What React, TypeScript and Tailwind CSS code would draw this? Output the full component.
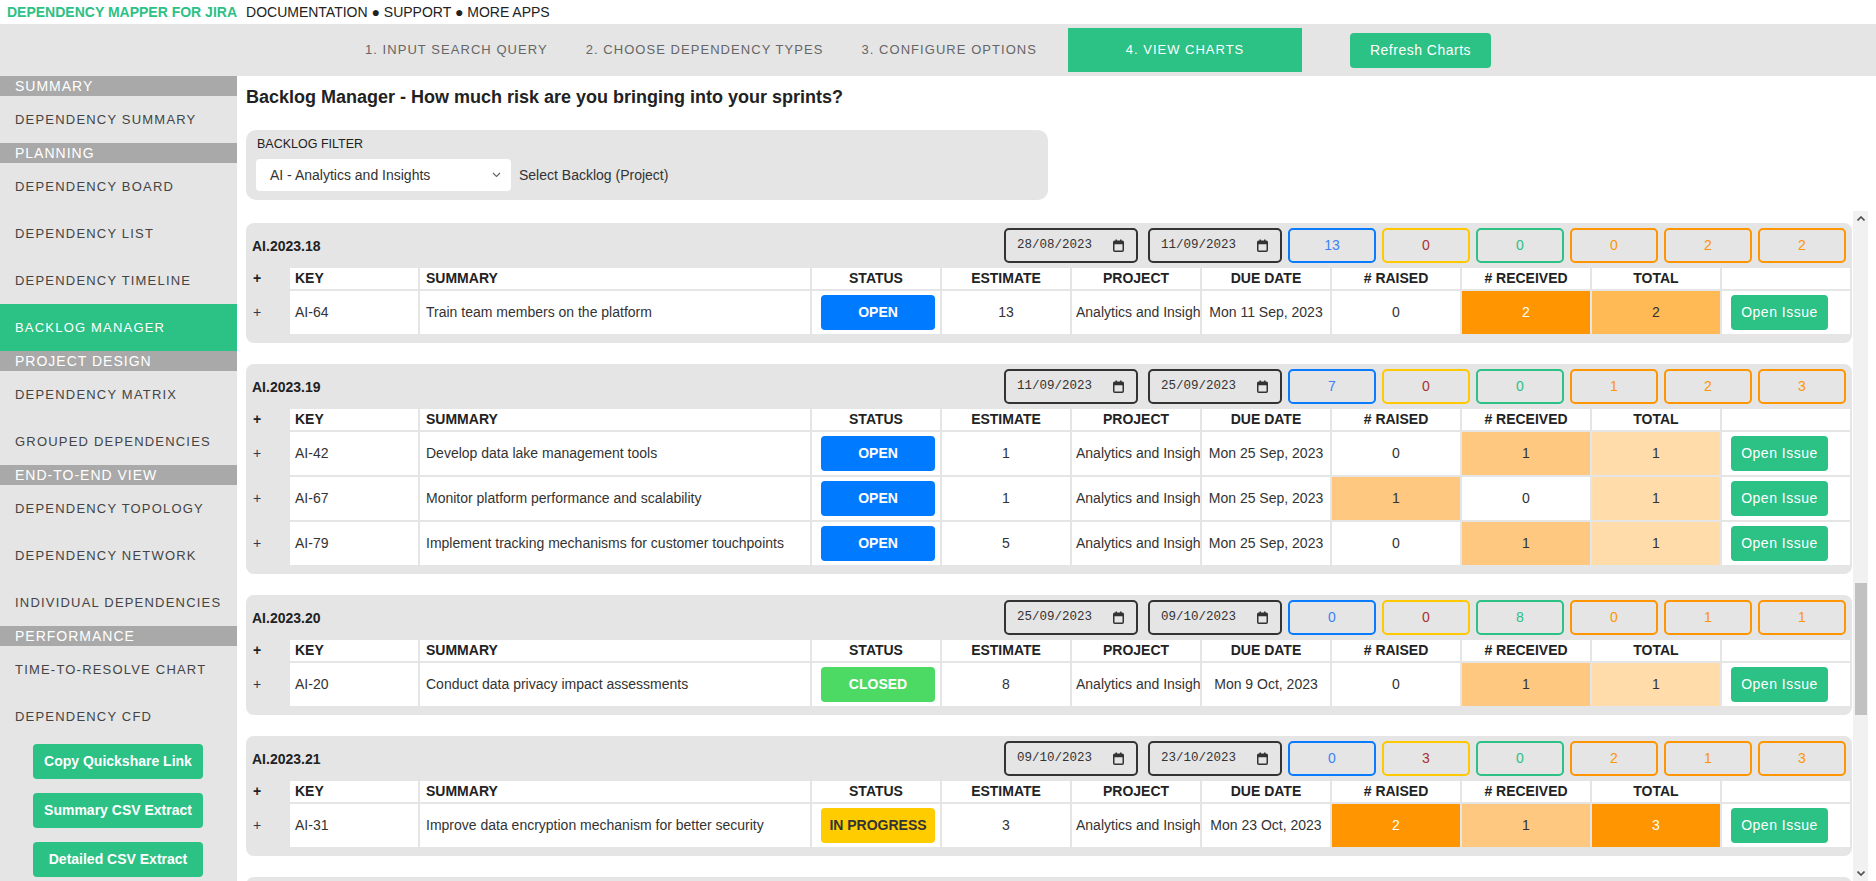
import React, { useEffect, useRef } from 'react';

type Status = 'OPEN' | 'CLOSED' | 'IN PROGRESS';

interface Row {
  key: string;
  summary: string;
  status: Status;
  estimate: number;
  due: string;
  raised: number;
  received: number;
}

interface Sprint {
  name: string;
  start: string;
  end: string;
  counts: number[];
  rows: Row[];
}

const MAX_RAISED = 2;
const MAX_RECEIVED = 2;
const MAX_TOTAL = 3;

const mk = (key: string, summary: string, status: Status, estimate: number, due: string, raised = 0, received = 0): Row => ({
  key,
  summary,
  status,
  estimate,
  due,
  raised,
  received,
});

// earlier sprints sit above the fold, the list is scrolled down to AI.2023.18
const before: Sprint[] = [
  {
    name: 'AI.2023.10', start: '24/04/2023', end: '08/05/2023', counts: [0, 0, 9, 1, 0, 1],
    rows: [
      mk('AI-3', 'Define KPIs for analytics dashboards', 'CLOSED', 3, 'Mon 8 May, 2023', 1, 0),
      mk('AI-5', 'Set up data warehouse environments', 'CLOSED', 5, 'Mon 8 May, 2023'),
      mk('AI-8', 'Document reporting data sources', 'CLOSED', 1, 'Mon 8 May, 2023'),
    ],
  },
  {
    name: 'AI.2023.11', start: '08/05/2023', end: '22/05/2023', counts: [0, 0, 8, 0, 1, 1],
    rows: [
      mk('AI-11', 'Build ingestion pipeline for event data', 'CLOSED', 5, 'Mon 22 May, 2023', 0, 1),
      mk('AI-12', 'Create data quality checks', 'CLOSED', 2, 'Mon 22 May, 2023'),
      mk('AI-14', 'Review access policies for analysts', 'CLOSED', 1, 'Mon 22 May, 2023'),
    ],
  },
  {
    name: 'AI.2023.12', start: '22/05/2023', end: '05/06/2023', counts: [0, 0, 7, 1, 1, 2],
    rows: [
      mk('AI-16', 'Design customer segmentation model', 'CLOSED', 3, 'Mon 5 Jun, 2023', 1, 1),
      mk('AI-17', 'Prototype churn prediction features', 'CLOSED', 3, 'Mon 5 Jun, 2023'),
      mk('AI-18', 'Tag historical orders by channel', 'CLOSED', 1, 'Mon 5 Jun, 2023'),
    ],
  },
  {
    name: 'AI.2023.13', start: '05/06/2023', end: '19/06/2023', counts: [0, 0, 7, 0, 0, 0],
    rows: [
      mk('AI-19', 'Automate weekly usage report', 'CLOSED', 2, 'Mon 19 Jun, 2023'),
      mk('AI-21', 'Add alerting for failed pipeline runs', 'CLOSED', 3, 'Mon 19 Jun, 2023'),
      mk('AI-23', 'Clean up legacy reporting tables', 'CLOSED', 2, 'Mon 19 Jun, 2023'),
    ],
  },
  {
    name: 'AI.2023.14', start: '19/06/2023', end: '03/07/2023', counts: [0, 0, 9, 1, 1, 2],
    rows: [
      mk('AI-25', 'Integrate marketing attribution data', 'CLOSED', 5, 'Mon 3 Jul, 2023', 1, 0),
      mk('AI-26', 'Publish self-service analytics guide', 'CLOSED', 1, 'Mon 3 Jul, 2023'),
      mk('AI-28', 'Optimise query performance on large datasets', 'CLOSED', 3, 'Mon 3 Jul, 2023', 0, 1),
    ],
  },
  {
    name: 'AI.2023.15', start: '03/07/2023', end: '17/07/2023', counts: [0, 0, 8, 0, 1, 1],
    rows: [
      mk('AI-30', 'Build product funnel visualisations', 'CLOSED', 3, 'Mon 17 Jul, 2023', 0, 1),
      mk('AI-33', 'Set up A/B testing framework', 'CLOSED', 3, 'Mon 17 Jul, 2023'),
      mk('AI-34', 'Map data lineage for finance reports', 'CLOSED', 2, 'Mon 17 Jul, 2023'),
    ],
  },
  {
    name: 'AI.2023.16', start: '17/07/2023', end: '31/07/2023', counts: [0, 0, 10, 0, 0, 0],
    rows: [
      mk('AI-36', 'Create executive summary dashboard', 'CLOSED', 5, 'Mon 31 Jul, 2023'),
      mk('AI-38', 'Validate forecasting model accuracy', 'CLOSED', 3, 'Mon 31 Jul, 2023'),
      mk('AI-39', 'Archive unused dashboards', 'CLOSED', 2, 'Mon 31 Jul, 2023'),
    ],
  },
  {
    name: 'AI.2023.17', start: '31/07/2023', end: '14/08/2023', counts: [3, 0, 5, 1, 0, 1],
    rows: [
      mk('AI-41', 'Roll out anomaly detection on key metrics', 'IN PROGRESS', 3, 'Mon 14 Aug, 2023', 1, 0),
      mk('AI-44', 'Consolidate customer identity records', 'CLOSED', 3, 'Mon 14 Aug, 2023'),
      mk('AI-45', 'Train analysts on new BI tooling', 'CLOSED', 2, 'Mon 14 Aug, 2023'),
    ],
  },
];

const visible: Sprint[] = [
  {
    name: 'AI.2023.18', start: '28/08/2023', end: '11/09/2023', counts: [13, 0, 0, 0, 2, 2],
    rows: [mk('AI-64', 'Train team members on the platform', 'OPEN', 13, 'Mon 11 Sep, 2023', 0, 2)],
  },
  {
    name: 'AI.2023.19', start: '11/09/2023', end: '25/09/2023', counts: [7, 0, 0, 1, 2, 3],
    rows: [
      mk('AI-42', 'Develop data lake management tools', 'OPEN', 1, 'Mon 25 Sep, 2023', 0, 1),
      mk('AI-67', 'Monitor platform performance and scalability', 'OPEN', 1, 'Mon 25 Sep, 2023', 1, 0),
      mk('AI-79', 'Implement tracking mechanisms for customer touchpoints', 'OPEN', 5, 'Mon 25 Sep, 2023', 0, 1),
    ],
  },
  {
    name: 'AI.2023.20', start: '25/09/2023', end: '09/10/2023', counts: [0, 0, 8, 0, 1, 1],
    rows: [mk('AI-20', 'Conduct data privacy impact assessments', 'CLOSED', 8, 'Mon 9 Oct, 2023', 0, 1)],
  },
  {
    name: 'AI.2023.21', start: '09/10/2023', end: '23/10/2023', counts: [0, 3, 0, 2, 1, 3],
    rows: [mk('AI-31', 'Improve data encryption mechanism for better security', 'IN PROGRESS', 3, 'Mon 23 Oct, 2023', 2, 1)],
  },
];

const after: Sprint[] = [
  {
    name: 'AI.2023.22', start: '23/10/2023', end: '06/11/2023', counts: [9, 0, 0, 1, 1, 2],
    rows: [
      mk('AI-47', 'Migrate reports to the new data platform', 'OPEN', 5, 'Mon 6 Nov, 2023', 1, 0),
      mk('AI-52', 'Define retention rules for raw event data', 'OPEN', 2, 'Mon 6 Nov, 2023'),
      mk('AI-55', 'Build customer lifetime value model', 'OPEN', 2, 'Mon 6 Nov, 2023', 0, 1),
    ],
  },
  {
    name: 'AI.2023.23', start: '06/11/2023', end: '20/11/2023', counts: [6, 0, 0, 0, 1, 1],
    rows: [
      mk('AI-58', 'Expose metrics API for partner teams', 'OPEN', 3, 'Mon 20 Nov, 2023', 0, 1),
      mk('AI-60', 'Review dashboard usage statistics', 'OPEN', 3, 'Mon 20 Nov, 2023'),
    ],
  },
  {
    name: 'AI.2023.24', start: '20/11/2023', end: '04/12/2023', counts: [8, 0, 0, 1, 0, 1],
    rows: [
      mk('AI-70', 'Automate data catalogue updates', 'OPEN', 3, 'Mon 4 Dec, 2023', 1, 0),
      mk('AI-72', 'Harden access logging for audits', 'OPEN', 3, 'Mon 4 Dec, 2023'),
      mk('AI-75', 'Plan capacity for peak reporting season', 'OPEN', 2, 'Mon 4 Dec, 2023'),
    ],
  },
  {
    name: 'AI.2023.25', start: '04/12/2023', end: '18/12/2023', counts: [5, 0, 0, 0, 0, 0],
    rows: [mk('AI-81', 'Prepare year-end analytics review', 'OPEN', 5, 'Mon 18 Dec, 2023')],
  },
];

const GREEN = 'bg-[#2cc185]';

const countStyles = [
  'border-[#0a7bff] text-[#3b82f6]',
  'border-[#ffc800] text-[#a83232]',
  'border-[#2cc185] text-[#2cc185]',
  'border-[#ff9500] text-[#ff9500]',
  'border-[#ff9500] text-[#ff9500]',
  'border-[#ff9500] text-[#ff9500]',
];

const statusStyles: Record<Status, string> = {
  OPEN: 'bg-[#007bff] text-white',
  CLOSED: 'bg-[#4cd964] text-white',
  'IN PROGRESS': 'bg-[#ffcc00] text-[#333]',
};

const heat = (v: number, max: number) => {
  const r = v / max;
  if (r === 0) return 'bg-white text-[#333]';
  if (r >= 1) return 'bg-[#ff9500] text-white';
  if (r >= 0.6) return 'bg-[#ffb955] text-[#333]';
  if (r >= 0.5) return 'bg-[#ffc880] text-[#333]';
  return 'bg-[#ffdcaa] text-[#333]';
};

const CalendarIcon = () => (
  <svg width="11" height="13" viewBox="0 0 11 13" fill="none">
    <rect x="0.75" y="2.25" width="9.5" height="10" rx="1" stroke="#333" strokeWidth="1.5" />
    <rect x="0.75" y="2.25" width="9.5" height="3" fill="#333" />
    <rect x="2.5" y="0.5" width="1.5" height="2.5" fill="#333" />
    <rect x="7" y="0.5" width="1.5" height="2.5" fill="#333" />
  </svg>
);

const DateBox = ({ value }: { value: string }) => (
  <div className="w-[134px] h-[35px] shrink-0 border-2 border-[#333] rounded-[5px] flex items-center justify-between pl-[11px] pr-[12px] font-['Liberation_Mono',monospace] text-[12.5px] text-[#333]">
    <span>{value}</span>
    <CalendarIcon />
  </div>
);

const SprintCard = React.forwardRef<HTMLDivElement, { sprint: Sprint }>(({ sprint }, ref) => (
  <div ref={ref} className="rounded-[8px] bg-[#e5e5e5] pt-[5px] pb-[7px]">
    {/* header: sprint name, dates, counters */}
    <div className="flex items-center h-[35px] pl-[6px] pr-[6px]">
      <div className="flex-1 pt-[1px] text-[14px] font-bold text-[#222]">{sprint.name}</div>
      <DateBox value={sprint.start} />
      <div className="ml-[10px]">
        <DateBox value={sprint.end} />
      </div>
      <div className="ml-[6px] flex gap-[6px]">
        {sprint.counts.map((c, i) => (
          <div
            key={i}
            className={`w-[88px] h-[35px] border-2 rounded-[5px] flex items-center justify-center text-[14px] ${countStyles[i]}`}
          >
            {c}
          </div>
        ))}
      </div>
    </div>

    <table className="mt-[3px] w-full table-fixed border-separate border-spacing-[2px] text-[14px] text-[#333]">
      <colgroup>
        <col className="w-[40px]" />
        <col className="w-[128px]" />
        <col />
        <col className="w-[128px]" />
        <col className="w-[128px]" />
        <col className="w-[128px]" />
        <col className="w-[128px]" />
        <col className="w-[128px]" />
        <col className="w-[128px]" />
        <col className="w-[128px]" />
        <col className="w-[128px]" />
      </colgroup>
      <thead>
        <tr className="h-[20px] font-bold text-[#222]">
          <th className="p-0 pl-[5px] text-left">+</th>
          <th className="p-0 pl-[5px] text-left bg-white">KEY</th>
          <th className="p-0 pl-[6px] text-left bg-white">SUMMARY</th>
          <th className="p-0 bg-white">STATUS</th>
          <th className="p-0 bg-white">ESTIMATE</th>
          <th className="p-0 bg-white">PROJECT</th>
          <th className="p-0 bg-white">DUE DATE</th>
          <th className="p-0 bg-white"># RAISED</th>
          <th className="p-0 bg-white"># RECEIVED</th>
          <th className="p-0 bg-white">TOTAL</th>
          <th className="p-0 bg-white"></th>
        </tr>
      </thead>
      <tbody>
        {sprint.rows.map((r) => {
          const total = r.raised + r.received;
          return (
            <tr key={r.key} className="h-[43px]">
              <td className="p-0 pl-[5px] text-[#335]">+</td>
              <td className="p-0 pl-[5px] bg-white">{r.key}</td>
              <td className="p-0 pl-[6px] bg-white whitespace-nowrap overflow-hidden">{r.summary}</td>
              <td className="p-0 pl-[9px] bg-white">
                <div className={`w-[114px] h-[35px] rounded-[4px] flex items-center justify-center font-bold ${statusStyles[r.status]}`}>
                  {r.status}
                </div>
              </td>
              <td className="p-0 bg-white text-center">{r.estimate}</td>
              <td className="p-0 px-[4px] bg-white text-center whitespace-nowrap overflow-hidden">Analytics and Insights</td>
              <td className="p-0 bg-white text-center whitespace-nowrap">{r.due}</td>
              <td className={`p-0 text-center ${heat(r.raised, MAX_RAISED)}`}>{r.raised}</td>
              <td className={`p-0 text-center ${heat(r.received, MAX_RECEIVED)}`}>{r.received}</td>
              <td className={`p-0 text-center ${heat(total, MAX_TOTAL)}`}>{total}</td>
              <td className="p-0 pl-[9px] bg-white">
                <button className={`w-[97px] h-[35px] rounded-[4px] ${GREEN} text-white text-[14px] tracking-[0.5px]`}>
                  Open Issue
                </button>
              </td>
            </tr>
          );
        })}
      </tbody>
    </table>
  </div>
));

const sections: { title: string; items: string[] }[] = [
  { title: 'SUMMARY', items: ['DEPENDENCY SUMMARY'] },
  { title: 'PLANNING', items: ['DEPENDENCY BOARD', 'DEPENDENCY LIST', 'DEPENDENCY TIMELINE', 'BACKLOG MANAGER'] },
  { title: 'PROJECT DESIGN', items: ['DEPENDENCY MATRIX', 'GROUPED DEPENDENCIES'] },
  { title: 'END-TO-END VIEW', items: ['DEPENDENCY TOPOLOGY', 'DEPENDENCY NETWORK', 'INDIVIDUAL DEPENDENCIES'] },
  { title: 'PERFORMANCE', items: ['TIME-TO-RESOLVE CHART', 'DEPENDENCY CFD'] },
];

const Sidebar = () => (
  <aside className="w-[237px] shrink-0 bg-[#e5e5e5] flex flex-col">
    {sections.map((s) => (
      <div key={s.title}>
        <div className="h-[20px] bg-[#a9a9a9] pl-[15px] text-[14px] leading-[20px] tracking-[1px] text-white">{s.title}</div>
        {s.items.map((item) => {
          const active = item === 'BACKLOG MANAGER';
          return (
            <div
              key={item}
              className={`h-[47px] flex items-center pl-[15px] text-[13px] tracking-[1.2px] ${
                active ? `${GREEN} text-white` : 'text-[#444]'
              }`}
            >
              {item}
            </div>
          );
        })}
      </div>
    ))}
    <div className="mt-[4px] pl-[33px] flex flex-col gap-[14px]">
      {['Copy Quickshare Link', 'Summary CSV Extract', 'Detailed CSV Extract'].map((b) => (
        <button key={b} className={`w-[170px] h-[35px] rounded-[4px] ${GREEN} text-white text-[14px] font-bold`}>
          {b}
        </button>
      ))}
    </div>
  </aside>
);

// the sprint list's scrollbar, as the browser drew it in the screenshot
const ScrollTrack = () => (
  <div className="w-[15px] shrink-0 bg-[#f1f1f1] flex flex-col items-center">
    <div className="h-[15px] w-full flex items-center justify-center">
      <svg width="8" height="5" viewBox="0 0 8 5">
        <path d="M0.5 4.5L4 1l3.5 3.5" fill="none" stroke="#505050" strokeWidth="1.6" />
      </svg>
    </div>
    <div className="mt-[357px] w-[12px] h-[132px] bg-[#c1c1c1]" />
    <div className="mt-auto h-[15px] w-full flex items-center justify-center">
      <svg width="8" height="5" viewBox="0 0 8 5">
        <path d="M0.5 0.5L4 4l3.5-3.5" fill="none" stroke="#505050" strokeWidth="1.6" />
      </svg>
    </div>
  </div>
);

const tabs = ['1. INPUT SEARCH QUERY', '2. CHOOSE DEPENDENCY TYPES', '3. CONFIGURE OPTIONS'];

export default function App() {
  const scrollRef = useRef<HTMLDivElement>(null);
  const anchorRef = useRef<HTMLDivElement>(null);

  useEffect(() => {
    if (scrollRef.current && anchorRef.current) {
      scrollRef.current.scrollTop = anchorRef.current.offsetTop - 12;
    }
  }, []);

  return (
    <div className="h-screen w-full flex flex-col overflow-hidden bg-white font-['Liberation_Sans',Arial,sans-serif]">
      {/* top strip */}
      <div className="h-[24px] shrink-0 flex items-center pl-[7px] text-[14px] text-[#222]">
        <span className="font-bold text-[#2cc185]">DEPENDENCY MAPPER FOR JIRA</span>
        <span className="ml-[9px]">DOCUMENTATION ● SUPPORT ● MORE APPS</span>
      </div>

      {/* steps */}
      <div className="h-[52px] shrink-0 bg-[#e5e5e5] flex items-center pl-[346px]">
        {tabs.map((t) => (
          <div key={t} className="px-[19px] text-[13px] tracking-[1.05px] text-[#666]">
            {t}
          </div>
        ))}
        <div className={`ml-[12px] w-[234px] h-[44px] ${GREEN} flex items-center justify-center text-[13px] tracking-[1px] text-white`}>
          4. VIEW CHARTS
        </div>
        <button className={`ml-[48px] w-[141px] h-[35px] rounded-[4px] ${GREEN} text-white text-[14px] tracking-[0.5px]`}>
          Refresh Charts
        </button>
      </div>

      <div className="flex flex-1 min-h-0">
        <Sidebar />

        <main className="flex-1 min-w-0 flex flex-col pl-[9px] pr-[8px]">
          <h1 className="pt-[10px] text-[18px] leading-[22px] font-bold text-[#222]">
            Backlog Manager - How much risk are you bringing into your sprints?
          </h1>

          <div className="mt-[22px] w-[802px] h-[70px] shrink-0 rounded-[10px] bg-[#e5e5e5] pl-[10px] pt-[7px]">
            <div className="pl-[1px] text-[12.5px] leading-[14px] text-[#222]">BACKLOG FILTER</div>
            <div className="mt-[8px] flex items-center gap-[8px] text-[14px] text-[#333]">
              <div className="w-[255px] h-[32px] bg-white rounded-[4px] pl-[14px] pr-[10px] flex items-center justify-between">
                <span>AI - Analytics and Insights</span>
                <svg width="9" height="6" viewBox="0 0 9 6" fill="none">
                  <path d="M1 1l3.5 3.5L8 1" stroke="#666" strokeWidth="1.2" />
                </svg>
              </div>
              <span>Select Backlog (Project)</span>
            </div>
          </div>

          <div className="mt-[11px] flex-1 min-h-0 flex">
            <div ref={scrollRef} className="relative flex-1 min-w-0 overflow-y-auto">
              <div className="flex flex-col gap-[21px] pt-[12px] pb-[12px] pr-[1px]">
                {before.map((s) => (
                  <SprintCard key={s.name} sprint={s} />
                ))}
                {visible.map((s, i) => (
                  <SprintCard key={s.name} sprint={s} ref={i === 0 ? anchorRef : undefined} />
                ))}
                {after.map((s) => (
                  <SprintCard key={s.name} sprint={s} />
                ))}
              </div>
            </div>
            <ScrollTrack />
          </div>
        </main>
      </div>
    </div>
  );
}
